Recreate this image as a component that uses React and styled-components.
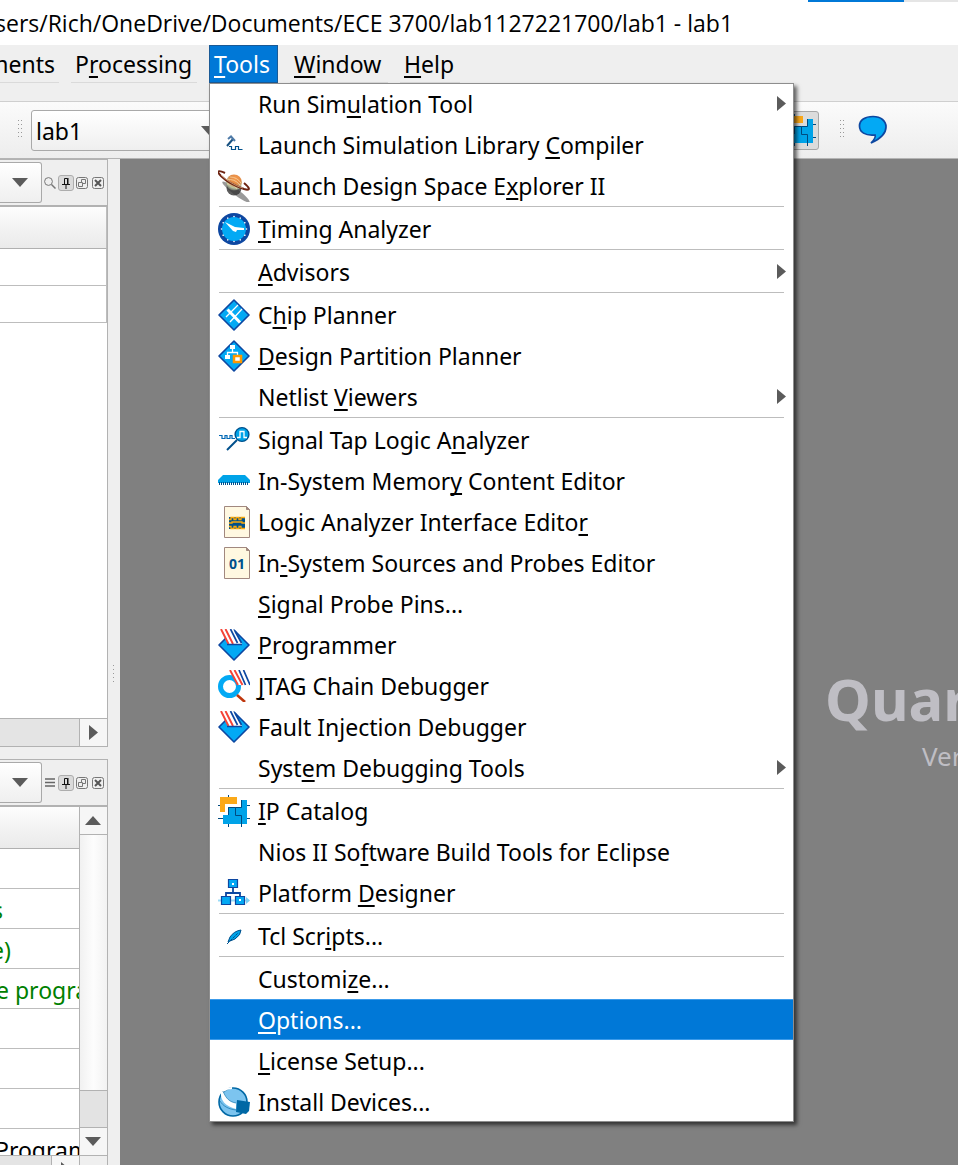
import React from "react";
import styled, { createGlobalStyle, css } from "styled-components";

const Global = createGlobalStyle`
  * { box-sizing: border-box; }
  body { margin: 0; background: #808080; }
  button, select { font: inherit; color: inherit; }
`;

const UI_FONT = `"Noto Sans", "Open Sans", sans-serif`;

const Page = styled.div`
  display: flex;
  flex-direction: column;
  height: 100vh;
  overflow: hidden;
  background: #efefef;
  color: #000;
  font-family: ${UI_FONT};
  font-size: 23px;
  line-height: 32px;
`;

const TopStrip = styled.div`
  display: flex;
  justify-content: flex-end;
  height: 2px;
  flex: none;
  background: #fff;
`;
const StripPart = styled.div`
  width: ${(p) => p.$width}px;
  background: ${(p) => p.$color};
`;

const TitleBar = styled.header`
  display: flex;
  align-items: center;
  height: 43px;
  flex: none;
  padding-bottom: 2px;
  background: #fff;
  overflow: hidden;
`;
const Title = styled.h1`
  margin: 0 0 0 -5px;
  font-family: "Open Sans", sans-serif;
  font-size: 23px;
  font-weight: 400;
  white-space: nowrap;
`;

const MenuBar = styled.nav`
  display: flex;
  gap: 12px;
  height: 56px;
  flex: none;
`;
const MenuSlot = styled.div`
  position: relative;
  width: ${(p) => p.$width}px;
  height: 38px;
`;
const MenuButton = styled.button`
  display: flex;
  justify-content: ${(p) => (p.$clipped ? "flex-end" : "flex-start")};
  align-items: center;
  width: 100%;
  height: 38px;
  padding: 0 4px;
  border: 0;
  border-bottom: 1px solid #dadada;
  background: transparent;
  overflow: hidden;
  white-space: pre;
  ${(p) =>
    p.$open &&
    css`
      border: 1px solid #1a5a96;
      background: #0078d7;
      color: #fff;
    `}
`;

const Menu = styled.div`
  position: absolute;
  z-index: 5;
  top: 38px;
  left: 0;
  width: 585px;
  background: #fff;
  outline: 1px solid #8e8e8e;
  outline-offset: -1px;
  box-shadow: 3px 3px 4px rgba(0, 0, 0, 0.6);
`;
const MenuItem = styled.button`
  display: flex;
  align-items: center;
  gap: 8px;
  width: 100%;
  height: 41px;
  padding: 0 8px 0 9px;
  border: 0;
  border-block: 1px solid ${(p) => (p.$active ? "#3c9bea" : "transparent")};
  background: ${(p) => (p.$active ? "#0078d7" : "transparent")};
  color: ${(p) => (p.$active ? "#fff" : "#000")};
  text-align: left;
`;
const ItemLabel = styled.span`
  flex: 1;
  white-space: pre;
`;
const IconSlot = styled.span`
  display: flex;
  justify-content: center;
  width: 32px;
  height: 32px;
  svg { display: block; }
`;
const Separator = styled.hr`
  height: 2px;
  margin: 0 10px;
  border: 0;
  border-top: 1px solid #bdbdbd;
`;
const Key = styled.span`
  text-decoration: underline;
  text-decoration-thickness: 2px;
  text-underline-offset: 3px;
  text-decoration-skip-ink: none;
`;

const ToolBar = styled.div`
  display: flex;
  align-items: center;
  height: 58px;
  flex: none;
  padding-left: 18px;
  border-top: 1px solid #cfcfcf;
  border-bottom: 1px solid #b4b4b4;
  background: linear-gradient(#fbfbfb, #ededed);
`;
const SelectBox = styled.label`
  display: grid;
  grid-template-columns: minmax(0, 1fr);
  align-items: center;
  width: ${(p) => p.$width}px;
  height: ${(p) => p.$height}px;
  flex: none;
  margin-left: ${(p) => p.$offset || 0}px;
  select, svg { grid-area: 1 / 1; }
  svg {
    justify-self: end;
    margin-right: ${(p) => p.$arrow}px;
    pointer-events: none;
  }
`;
const Select = styled.select`
  width: 100%;
  height: 100%;
  padding: 2px 4px 0;
  appearance: none;
  border: 1px solid #a9a9a9;
  border-radius: ${(p) => (p.$flush ? "0 3px 3px 0" : "3px")};
  border-left-width: ${(p) => (p.$flush ? 0 : 1)}px;
  background: linear-gradient(#fff, #efefef);
`;
const CatalogButton = styled.button`
  display: flex;
  align-items: center;
  justify-content: flex-end;
  width: 42px;
  height: 39px;
  margin: 0 21px 0 556px;
  padding: 0 2px 0 0;
  border: 1px solid #a6a6a6;
  border-radius: 3px;
  background: #dcdcdc;
`;
const ChatButton = styled.button`
  display: flex;
  margin-left: 12px;
  padding: 0;
  border: 0;
  background: none;
`;

const Workspace = styled.div`
  display: flex;
  flex: 1;
  min-height: 0;
`;
const DockColumn = styled.aside`
  display: flex;
  flex-direction: column;
  gap: 12px;
  width: 108px;
  flex: none;
`;
const Dock = styled.section`
  display: flex;
  flex-direction: column;
  flex: ${(p) => p.$flex};
  min-height: 0;
  overflow: hidden;
  border: 0 solid #b2b2b2;
  border-width: 1px 1px ${(p) => (p.$cut ? 0 : 1)}px 0;
  background: #fff;
`;
const DockHead = styled.div`
  display: flex;
  align-items: center;
  height: 47px;
  flex: none;
  border-bottom: 2px solid #b2b2b2;
  background: #efefef;
`;
const DockButtons = styled.div`
  display: flex;
  align-items: center;
`;
const DockButton = styled.button`
  display: flex;
  align-items: center;
  justify-content: center;
  width: 16px;
  height: 16px;
  padding: 0;
  border: ${(p) => (p.$down ? "1px solid #adadad" : "0")};
  border-radius: 3px;
  background: ${(p) => (p.$down ? "#dadada" : "none")};
`;
const DockBody = styled.div`
  display: flex;
  flex: ${(p) => (p.$rows ? "0 0 348px" : "1")};
  min-height: 0;
`;
const Table = styled.table`
  display: block;
  flex: 1;
  min-width: 0;
  height: 100%;
  overflow: hidden;
  thead, tbody, tr { display: block; }
`;
const HeadCell = styled.th`
  display: block;
  height: 42px;
  padding: 0;
  border-bottom: 1px solid #b0b0b0;
  border-right: ${(p) => (p.$edge ? 1 : 0)}px solid #bdbdbd;
  background: linear-gradient(#fdfdfd, #f3f3f3 50%, #eaeaea);
`;
const Cell = styled.td`
  display: flex;
  align-items: center;
  height: ${(p) => p.$height}px;
  padding: 2px 0 0;
  border-bottom: 1px solid #bdbdbd;
  border-right: ${(p) => (p.$edge ? 1 : 0)}px solid #bdbdbd;
  color: ${(p) => p.$color || "#008000"};
  white-space: pre;
`;
const CellText = styled.span`
  margin-left: -${(p) => p.$scroll}px;
`;
const ScrollRow = styled.div`
  display: flex;
  height: 28px;
  flex: none;
  border-top: 1px solid #b2b2b2;
  background: #e4e4e4;
`;
const ScrollTrack = styled.div`flex: 1;`;
const ScrollColumn = styled.div`
  display: flex;
  flex-direction: column;
  width: 28px;
  border-left: 1px solid #b2b2b2;
  background: linear-gradient(90deg, #f1f1f1, #fdfdfd 50%, #f2f2f2);
`;
const ScrollButton = styled.button`
  display: flex;
  align-items: center;
  justify-content: center;
  width: ${(p) => p.$width || 27}px;
  height: 28px;
  flex: none;
  padding: 0 1px 1px 0;
  border: 0 solid #b2b2b2;
  border-width: ${(p) => p.$edges};
  background: #f6f6f6;
`;
const ScrollThumb = styled.div`
  height: 37px;
  border-top: 1px solid #b2b2b2;
  background: #e3e3e3;
`;
const ScrollCorner = styled.div`
  width: 28px;
  border-left: 1px solid #b2b2b2;
  background: #efefef;
`;
const Splitter = styled.div`
  display: flex;
  align-items: center;
  justify-content: center;
  width: 12px;
  flex: none;
  padding-top: 26px;
`;
const Canvas = styled.main`
  flex: 1;
  min-width: 0;
  overflow: hidden;
  padding-top: 502px;
  background: #808080;
  color: #bfbec4;
  white-space: nowrap;
`;
const Brand = styled.h2`
  margin: 0 0 0 705px;
  font-size: 58px;
  font-weight: 700;
  line-height: 76px;
`;
const Version = styled.p`
  margin: 0 0 0 802px;
  font-size: 26px;
  line-height: 38px;
`;

const Svg = ({ w = 32, h = 32, children }) => (
  <svg width={w} height={h} viewBox={`0 0 ${w} ${h}`} aria-hidden>
    {children}
  </svg>
);

const Down = ({ w = 16, h = 9 }) => (
  <Svg w={w} h={h}><path d={`M0 0H${w}L${w / 2} ${h}Z`} fill="#5b5b5b" /></Svg>
);
const Up = () => <Svg w={16} h={9}><path d="M0 9H16L8 0Z" fill="#5b5b5b" /></Svg>;
const Right = ({ w = 9, h = 15 }) => (
  <Svg w={w} h={h}><path d={`M0 0V${h}L${w} ${h / 2}Z`} fill="#5b5b5b" /></Svg>
);

const Grip = ({ cols = 2, rows = 5 }) => (
  <Svg w={cols * 3} h={rows * 4}>
    {Array.from({ length: cols * rows }, (_, i) => (
      <rect key={i} x={(i % cols) * 3} y={Math.floor(i / cols) * 4} width="1" height="1" fill="#999" />
    ))}
  </Svg>
);

const Hammer = () => (
  <Svg>
    <path d="M9 17l6-7" fill="none" stroke="#17507f" strokeWidth="2" />
    <path d="M10 10l3-2.500 4 4.500" fill="none" stroke="#4f7ba8" strokeWidth="2" />
    <path d="M11 17.500h2.500v3h4v-3h3v3h4" fill="none" stroke="#00508c" strokeWidth="1.200" />
  </Svg>
);

const Planet = () => (
  <Svg>
    <defs>
      <radialGradient id="planet" cx=".6" cy=".25" r=".8">
        <stop offset="0" stopColor="#f79a4d" />
        <stop offset=".45" stopColor="#e08a45" />
        <stop offset=".75" stopColor="#b9c4a2" />
        <stop offset="1" stopColor="#555" />
      </radialGradient>
    </defs>
    <ellipse cx="18" cy="22" rx="17" ry="3" transform="rotate(37 18 22)" fill="#555" opacity=".6" />
    <circle cx="16" cy="18" r="7.500" fill="#333" opacity=".8" />
    <circle cx="16" cy="12.500" r="8" fill="url(#planet)" />
    <path d="M9 10q7-2 13 5M9 14q6-1 10 5M12 7q7 0 11 6" stroke="#f6dcaa" strokeWidth="1" fill="none" opacity=".7" />
    <path d="M7 3C-1-1-1 2 3 6c5 5 14 10 23 13 7 2 6-1 0-6" fill="none" stroke="#6d2412" strokeWidth="2" />
    <path d="M3 5c5 5 14 11 22 13" fill="none" stroke="#d4aa86" strokeWidth=".8" />
  </Svg>
);

const Clock = () => (
  <Svg>
    <circle cx="16" cy="16" r="16" fill="#0d47a1" />
    <circle cx="16" cy="16" r="12" fill="#03a9f4" />
    <g fill="#fff">
      {Array.from({ length: 12 }, (_, i) => (
        <circle key={i} cx="16" cy="3.500" r="0.800" transform={`rotate(${i * 30} 16 16)`} />
      ))}
      <path d="M7 9l10 5 9 1v2h-7l-1 2-3-1z" />
    </g>
  </Svg>
);

const Diamond = () => (
  <path d="M16 1L31 16 16 31 1 16z" fill="#03a9f4" stroke="#0d47a1" strokeWidth="1.600" strokeLinejoin="round" />
);
const Chip = () => (
  <Svg>
    <Diamond />
    <path d="M9.500 10.500L22 23.500" stroke="#fff" strokeWidth="3" />
    <path d="M8 18L20 6M12 23L24 10" stroke="#fff" strokeWidth="1.300" />
  </Svg>
);
const Partition = () => (
  <Svg>
    <Diamond />
    <path d="M14.500 8v5M9.500 16v-3.500h10V16" fill="none" stroke="#fff" strokeWidth="1.300" />
    <path d="M12 5h5v4h-5zM7 15h5v4H7z" fill="#fff" />
    <path d="M16 16h7v6h-7z" fill="#fff" stroke="#ff9800" strokeWidth="2.500" />
  </Svg>
);
const SignalTap = () => (
  <Svg>
    <path d="M1 11.500h3v3h3v-3h2v3h3v-3h2v3h3" fill="none" stroke="#0068b5" strokeWidth="1.200" />
    <path d="M19 16L9 26" stroke="#00508c" strokeWidth="2" />
    <circle cx="24" cy="10.500" r="6.900" fill="#00a3e8" stroke="#00508c" strokeWidth="1.400" />
    <path d="M19 13.500h3v-6h4v6h3" fill="none" stroke="#fff" strokeWidth="1.300" />
  </Svg>
);
const Memory = () => (
  <Svg>
    <path d="M5 10h22l5 5v3H0v-3z" fill="#00a3e8" />
    <path d="M1 18.500h30" stroke="#00508c" strokeWidth="3" strokeDasharray="1 1" />
  </Svg>
);
const Sheet = () => (
  <>
    <path d="M6.500.5h22l3 3v28h-25z" fill="#fff8e1" stroke="#a1887f" />
    <path d="M28.500.5v3h3z" fill="#a1887f" stroke="#a1887f" />
  </>
);
const LogicSheet = () => (
  <Svg>
    <Sheet />
    <path d="M11 11h16v12H11z" fill="#00508c" />
    <path d="M11 13.500h2v-2h3v2h2v-2h3v2h2v-2h4M11 17h3v-1h10v1h3M11 20.500h2v2h3v-2h2v2h3v-2h2v2h4" stroke="#fca90a" strokeWidth="1.300" fill="none" />
  </Svg>
);
const ProbeText = styled.text`
  font: 700 14px ${UI_FONT};
  fill: #00508c;
`;
const ProbeSheet = () => (
  <Svg>
    <Sheet />
    <ProbeText x="19" y="22" textAnchor="middle">01</ProbeText>
  </Svg>
);
const Programmer = () => (
  <Svg>
    <Diamond />
    <path d="M2 0h13l9 15H10z" fill="#fff" />
    <path d="M3 0l7.500 15M7.500 0L15 15" stroke="#f44336" strokeWidth="1.900" />
    <path d="M12.500 0l7 14M17 2l6.500 12" stroke="#0d47a1" strokeWidth="1.700" />
    <path d="M9 15.500h15" stroke="#0d47a1" strokeWidth="1.500" />
  </Svg>
);
const Jtag = () => (
  <Svg>
    <circle cx="11.500" cy="16.500" r="9" fill="#fff" stroke="#03a9f4" strokeWidth="5" />
    <path d="M12 0l8 15h12V0z" fill="#fff" />
    <path d="M12 0l8 15M16.500 0l8 15" stroke="#f44336" strokeWidth="1.900" />
    <path d="M21 0l6.500 15M25.500 0l6.500 15" stroke="#0d47a1" strokeWidth="1.700" />
    <path d="M19 25l8 7" stroke="#bf360c" strokeWidth="2.600" />
  </Svg>
);
const Catalog = () => (
  <Svg>
    <path d="M10.500 0v3M28 10.500h4M0 10.500h3M0 23.500h5M10.500 29v3M23.500 29v3M28 23.500h4" stroke="#004a80" />
    <path d="M5 20h5v-8h13V5h6v24H5z" fill="#00a3e8" />
    <path d="M2 2h17v7H7v8H2z" fill="#fba919" />
    <path d="M23.500 5v7.500h-6v8h6V29M10.500 20v-7.500h7" fill="none" stroke="#004a80" />
  </Svg>
);
const Platform = () => (
  <Svg>
    <path d="M0 23.500h29" stroke="#9adcf8" strokeWidth="2" />
    <path d="M28 20l4 3.500-4 3.500z" fill="#7bd0f4" />
    <path d="M15 10v6M8 20v-4h14v4" fill="none" stroke="#0d47a1" strokeWidth="1.800" />
    <g fill="#03a9f4" stroke="#0d47a1" strokeWidth="1.200">
      <path d="M10.500 2.500h9v8h-9zM3.500 19.500h9v8h-9zM17.500 19.500h9v8h-9z" />
    </g>
    <path d="M14 6h2v2h-2zM21 22h2v2h-2z" fill="#fff" />
  </Svg>
);
const Feather = () => (
  <Svg>
    <path d="M10 22l2-5q4-6 11-7 0 5-6 9l-5 2z" fill="#00a3e8" stroke="#00508c" />
    <path d="M9 24L20 13" stroke="#00508c" strokeDasharray="3 1" />
  </Svg>
);
const Globe = () => (
  <Svg>
    <circle cx="15" cy="16" r="14" fill="#7cc4ef" stroke="#0068a5" strokeWidth="1.600" />
    <path d="M3 6C2 14 7 20 18 23v-6C11 16 8 12 5 5z" fill="#fff" />
    <path d="M5 5c3 8 7 11 13 12M2 15c3 5 8 8 16 9" fill="none" stroke="#0068a5" strokeWidth=".6" />
    <path d="M5 5Q9 2 14 2" fill="none" stroke="#fff" strokeWidth="2" />
    <path d="M19 14l13 2-1 9-3 3-10-2z" fill="#0068a5" />
  </Svg>
);
const Bubble = () => (
  <Svg w={30} h={30}>
    <path d="M15 1.500C23 1.500 28 6 28 12c0 7-6 12-15 16 4-4 5-6 4-8C7 21 1.500 17 1.500 11 1.500 5 7 1.500 15 1.500z" fill="#03a9f4" stroke="#0d47a1" strokeWidth="1.700" />
  </Svg>
);
const Search = () => (
  <Svg w={12} h={12}>
    <circle cx="4.500" cy="4.500" r="3.900" fill="none" stroke="#777" />
    <path d="M7.500 7.500l4 4" stroke="#777" strokeWidth="1.500" />
  </Svg>
);
const Lines = () => (
  <Svg w={10} h={9}><path d="M0 1h10M0 4.500h10M0 8h10" stroke="#666" strokeWidth="1.300" /></Svg>
);
const Pin = () => (
  <Svg w={8} h={12}><path d="M2.500 7V1.500H5.500V7M0 7.500h8M4 8v4M6 1v6" fill="none" stroke="#111" /></Svg>
);
const Float = () => (
  <Svg w={12} h={12}>
    <rect x=".5" y=".5" width="11" height="11" rx="2" fill="none" stroke="#777" />
    <path d="M2.500 5.500h4v4h-4zM5.500 5.500v-3h4v4h-3" fill="none" stroke="#777" />
  </Svg>
);
const Close = () => (
  <Svg w={12} h={12}>
    <rect x=".5" y=".5" width="11" height="11" rx="2" fill="none" stroke="#777" />
    <path d="M3 3l6 6M9 3L3 9" stroke="#555" strokeWidth="2" />
  </Svg>
);

const withKey = (text) => {
  const at = text.indexOf("&");
  if (at < 0) return text;
  return (
    <>
      {text.slice(0, at)}
      <Key>{text[at + 1]}</Key>
      {text.slice(at + 2)}
    </>
  );
};

const groups = [
  [
    { text: "Run Sim&ulation Tool", sub: true },
    { text: "Launch Simulation Library &Compiler", icon: Hammer },
    { text: "Launch Design Space E&xplorer II", icon: Planet },
  ],
  [{ text: "&Timing Analyzer", icon: Clock }],
  [{ text: "&Advisors", sub: true }],
  [
    { text: "C&hip Planner", icon: Chip },
    { text: "&Design Partition Planner", icon: Partition },
    { text: "Netlist &Viewers", sub: true },
  ],
  [
    { text: "Signal Tap Logic A&nalyzer", icon: SignalTap },
    { text: "In-System Memor&y Content Editor", icon: Memory },
    { text: "Logic Analyzer Interface Edito&r", icon: LogicSheet },
    { text: "In&-System Sources and Probes Editor", icon: ProbeSheet },
    { text: "&Signal Probe Pins..." },
    { text: "&Programmer", icon: Programmer },
    { text: "&JTAG Chain Debugger", icon: Jtag },
    { text: "Fault Injection Debugger", icon: Programmer },
    { text: "Syst&em Debugging Tools", sub: true },
  ],
  [
    { text: "&IP Catalog", icon: Catalog },
    { text: "Nios II So&ftware Build Tools for Eclipse" },
    { text: "Platform &Designer", icon: Platform },
  ],
  [{ text: "Tcl Scr&ipts...", icon: Feather }],
  [
    { text: "Customi&ze..." },
    { text: "&Options...", active: true },
    { text: "&License Setup..." },
    { text: "Install Devices...", icon: Globe },
  ],
];

const ToolsMenu = () => (
  <Menu role="menu" aria-label="Tools">
    {groups.map((items, g) => (
      <React.Fragment key={g}>
        {g > 0 && <Separator />}
        {items.map(({ text, icon: Icon, sub, active }) => (
          <MenuItem key={text} role="menuitem" $active={active}>
            <IconSlot>{Icon && <Icon />}</IconSlot>
            <ItemLabel>{withKey(text)}</ItemLabel>
            {sub && <Right />}
          </MenuItem>
        ))}
      </React.Fragment>
    ))}
  </Menu>
);

const menus = [
  { text: "ments", width: 59, clipped: true },
  { text: "P&rocessing", width: 126 },
  { text: "&Tools", width: 69, open: true },
  { text: "&Window", width: 98 },
  { text: "&Help", width: 60 },
];

const DockHeader = ({ label, first: First, firstLabel }) => (
  <DockHead>
    <SelectBox $width={42} $height={41} $arrow={14}>
      <Select $flush aria-label={label} />
      <Down />
    </SelectBox>
    <DockButtons>
      <DockButton aria-label={firstLabel}><First /></DockButton>
      <DockButton aria-label="Pin" $down><Pin /></DockButton>
      <DockButton aria-label="Float"><Float /></DockButton>
      <DockButton aria-label="Close"><Close /></DockButton>
    </DockButtons>
  </DockHead>
);

const tasks = [
  { text: "" },
  { text: "s", scroll: 8 },
  { text: "e)", scroll: 9 },
  { text: "e program", scroll: 4 },
  { text: "" },
  { text: "" },
  { text: "" },
  { text: "Program", scroll: 5, color: "#000" },
];

export default function App() {
  return (
    <Page>
      <Global />
      <TopStrip>
        <StripPart $width={96} $color="#0078d7" />
        <StripPart $width={54} $color="#e5e5e5" />
      </TopStrip>
      <TitleBar>
        <Title>sers/Rich/OneDrive/Documents/ECE 3700/lab1127221700/lab1 - lab1</Title>
      </TitleBar>
      <MenuBar>
        {menus.map(({ text, width, clipped, open }) => (
          <MenuSlot key={text} $width={width}>
            <MenuButton $clipped={clipped} $open={open} aria-expanded={open}>
              <span>{withKey(text)}</span>
            </MenuButton>
            {open && <ToolsMenu />}
          </MenuSlot>
        ))}
      </MenuBar>
      <ToolBar>
        <Grip />
        <SelectBox $width={190} $height={41} $arrow={4} $offset={7}>
          <Select aria-label="Project" defaultValue="lab1">
            <option>lab1</option>
          </Select>
          <Down />
        </SelectBox>
        <CatalogButton aria-label="IP Catalog"><Catalog /></CatalogButton>
        <Grip />
        <ChatButton aria-label="Feedback"><Bubble /></ChatButton>
      </ToolBar>
      <Workspace>
        <DockColumn>
          <Dock $flex="1 1 0">
            <DockHeader label="Navigator view" first={Search} firstLabel="Search" />
            <DockBody>
              <Table>
                <thead><tr><HeadCell $edge aria-label="Entity" /></tr></thead>
                <tbody>
                  <tr><Cell $edge $height={37} /></tr>
                  <tr><Cell $edge $height={37} /></tr>
                </tbody>
              </Table>
            </DockBody>
            <ScrollRow>
              <ScrollTrack />
              <ScrollButton aria-label="Scroll right" $width={28} $edges="0 0 0 1px"><Right /></ScrollButton>
            </ScrollRow>
          </Dock>
          <Dock $flex="0 0 406px" $cut>
            <DockHeader label="Task flow" first={Lines} firstLabel="Options" />
            <DockBody $rows>
              <Table>
                <thead><tr><HeadCell aria-label="Task" /></tr></thead>
                <tbody>
                  {tasks.map(({ text, scroll = 0, color }, i) => (
                    <tr key={i}>
                      <Cell $height={40} $color={color}>
                        <CellText $scroll={scroll}>{text}</CellText>
                      </Cell>
                    </tr>
                  ))}
                </tbody>
              </Table>
              <ScrollColumn>
                <ScrollButton aria-label="Scroll up" $edges="0 0 1px 0"><Up /></ScrollButton>
                <ScrollTrack />
                <ScrollThumb />
                <ScrollButton aria-label="Scroll down" $edges="1px 0 0 0"><Down /></ScrollButton>
              </ScrollColumn>
            </DockBody>
            <ScrollRow>
              <ScrollTrack />
              <ScrollButton aria-label="Scroll tasks right" $width={28} $edges="0 0 0 1px"><Right /></ScrollButton>
              <ScrollCorner />
            </ScrollRow>
          </Dock>
        </DockColumn>
        <Splitter><Grip cols={1} /></Splitter>
        <Canvas>
          <Brand>Quartus Prime</Brand>
          <Version>Version</Version>
        </Canvas>
      </Workspace>
    </Page>
  );
}
